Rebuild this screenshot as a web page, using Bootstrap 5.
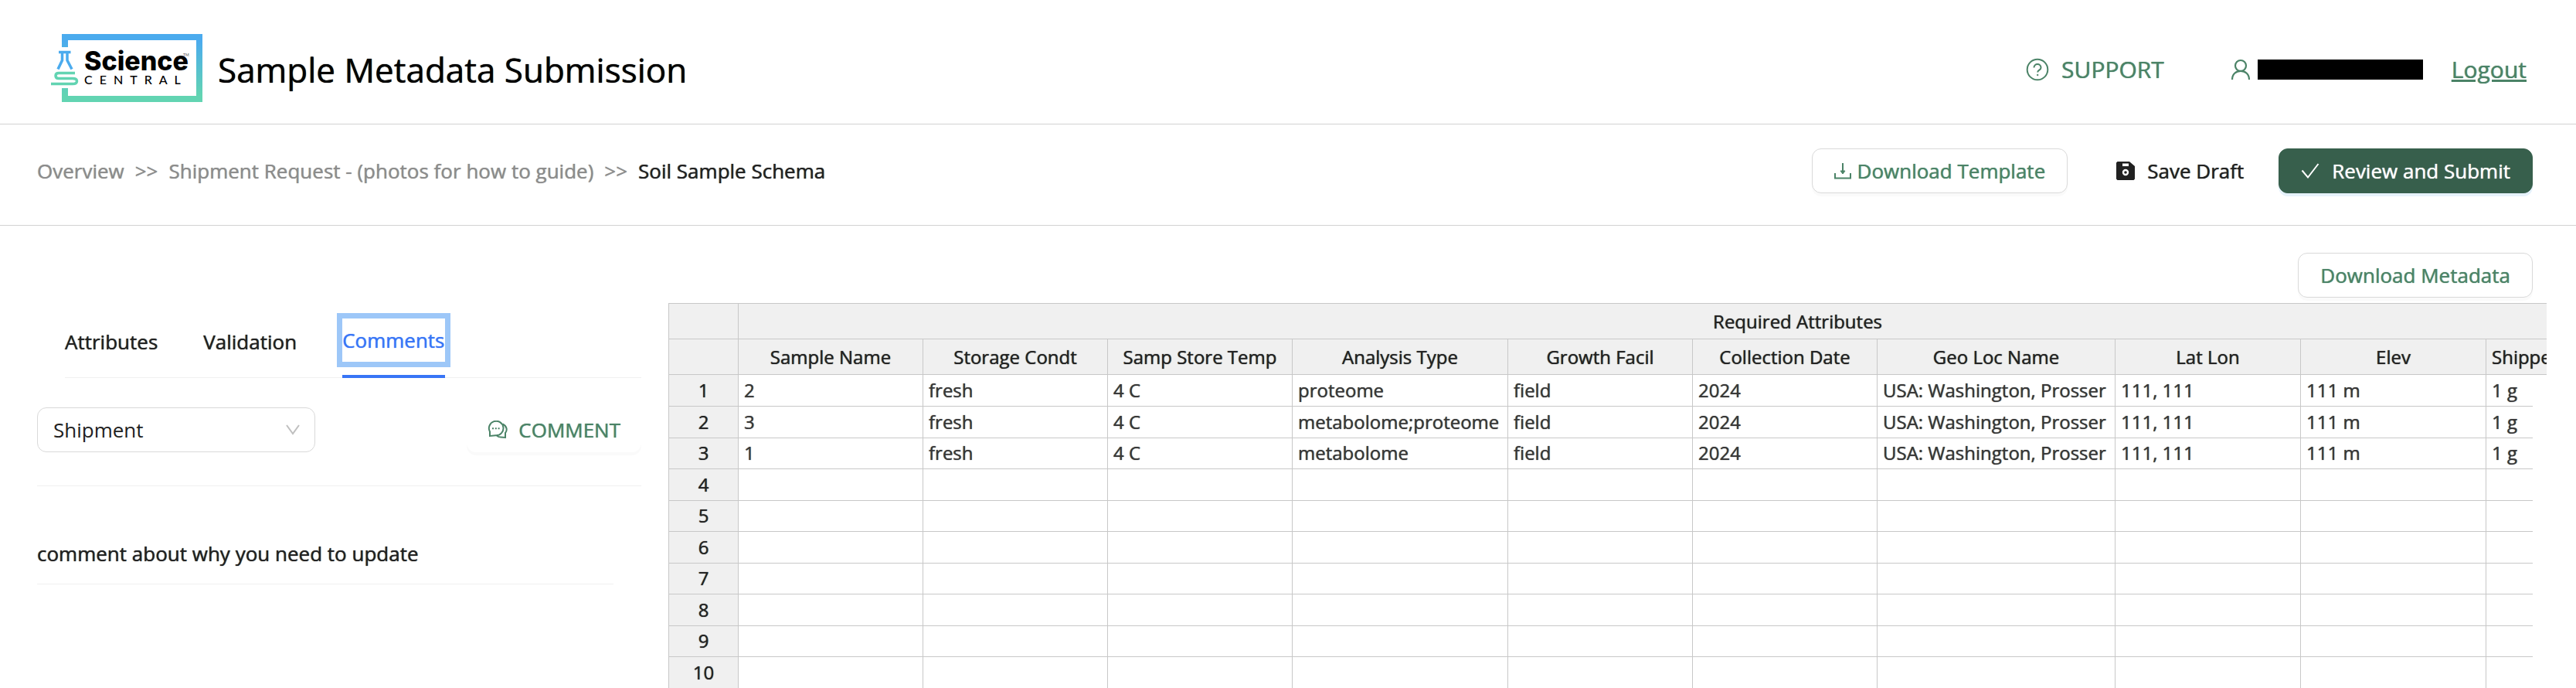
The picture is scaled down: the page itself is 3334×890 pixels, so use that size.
<!doctype html>
<html lang="en">
<head>
<meta charset="utf-8">
<meta name="viewport" content="width=device-width, initial-scale=1">
<title>Sample Metadata Submission</title>
<link href="https://cdn.jsdelivr.net/npm/bootstrap@5.3.0/dist/css/bootstrap.min.css" rel="stylesheet">
<script src="https://cdn.jsdelivr.net/npm/bootstrap@5.3.0/dist/js/bootstrap.bundle.min.js"></script>
<style>
body{font-family:"Open Sans","Noto Sans",sans-serif;font-size:26px;font-weight:500;color:#212121;line-height:40px;overflow-x:hidden;text-shadow:0 0 1px currentColor}
button{text-shadow:inherit}
.topbar{padding:36px 64px 24px;border-bottom:1px solid #d2d2d2}
.brand-logo{width:204px;height:100px;display:block;text-shadow:none}
.page-title{font-size:44px;font-weight:500;line-height:60px;color:#000;margin-left:14px}
.top-link,.top-link:hover{font-size:30px;color:#4b8367}
.user-mark{color:#4b8367;margin-left:86px}
.redacted{width:214px;height:26px;background:#000;margin:0 37px 0 9px}
.crumbbar{padding:31px 56px 41px 48px;border-bottom:1px solid #d2d2d2}
.crumbs{gap:14px}
.crumbs a,.crumbs .sep{color:#8c8c8c;text-decoration:none}
.act-row{gap:34px}
.act{font-size:26px;font-weight:500;line-height:40px;padding:8px 28px;border-radius:12px;border:1px solid #d9d9d9;color:#4b8367;background:#fff;box-shadow:0 4px 0 rgba(0,0,0,.02);display:flex;align-items:center;gap:16px}
.act-tight{gap:8px}
.act-plain{border-color:transparent;color:#212121;box-shadow:none;background:none;padding-right:10px}
.act-solid{background:#375f4c;border-color:#375f4c;color:#fff;box-shadow:0 4px 0 #e6f2fb}
.act-quiet{border-color:transparent;padding:8px 26px;gap:14px}
.main-area{padding-left:48px;gap:35px}
.side{width:782px;padding-top:120px}
.tab-row{margin-left:36px;gap:59px;border-bottom:1px solid #f0f0f0}
.tab-btn{background:none;border:0;padding:0 0 17px;color:#212121;font-weight:500}
.tab-btn span{display:block;padding:8px 0}
.tab-btn.current{color:#3875f6;border-bottom:4px solid #3875f6;margin-bottom:-1px}
.tab-btn.current span{outline:7px solid #9dc7f8}
.pick-row{padding:38px 0 43px;border-bottom:1px solid #f0f0f0}
.pick{width:360px;height:58px;padding:0 20px;border:1px solid #d9d9d9;border-radius:12px;font-size:26px;font-weight:400;line-height:40px;color:#212121;background:none;appearance:none}
.pick-wrap{display:grid;align-items:center}
.pick-wrap>*{grid-area:1/1}
.pick-wrap svg{justify-self:end;margin-right:20px}
.note{margin:67px 36px 0 0;padding-bottom:19px;border-bottom:1px solid #f0f0f0}
.data-side{padding-top:35px;min-width:0}
.data-tools{padding:0 56px 7px 0}
.head-clip{overflow:hidden;margin-right:38px}
.body-clip{overflow:hidden;margin-right:56px}
.sheet{table-layout:fixed;border-collapse:collapse;width:2832px;font-size:24px;line-height:32px}
.sheet th,.sheet td{border:1px solid #c8c8c8;padding:0 7px;height:41px;white-space:nowrap}
.sheet td{color:#373737}
.sheet th{background:#f0f0f0;text-align:center;font-weight:500;color:#222;padding:0}
.sheet thead th{height:46px}
.sheet thead th.cut{text-align:left;padding-left:7px}
.body-clip tr:nth-child(odd)>*{height:40px}
.body-clip tr:first-child>*{border-top:0}
.c-num{width:90px}.c-std{width:239px}.c-type{width:279px}.c-geo{width:308px}.c-wide{width:240px}
</style>
</head>
<body>
<header class="topbar d-flex align-items-center">
  <svg class="brand-logo" viewBox="64 36 204 100" role="img" aria-label="Science Central">
    <defs><linearGradient id="frame" gradientUnits="userSpaceOnUse" x1="0" y1="44" x2="0" y2="132"><stop offset=".1" stop-color="#4babee"/><stop offset=".9" stop-color="#62d4b2"/></linearGradient></defs>
    <path d="M80 61V44H262V132H80V114H88V124H254V52H88V61Z" fill="url(#frame)"/>
    <path d="M76 67.500H91.500M80.500 68V78L75 89.500M87 68V78L93 89.500" fill="none" stroke="#4babee" stroke-width="3.500"/>
    <path d="M97 94.500H76q-4 0-4 3.500t4 3.500H94q5.500 0 5.500 3.500t-5.500 3.500H66" fill="none" stroke="#62d4b2" stroke-width="3.500"/>
    <text x="109" y="91" font-family="Inter" font-weight="800" font-size="34" fill="#000">Science</text>
    <text x="109" y="109" font-family="Lato" font-weight="500" font-size="16" letter-spacing="9" fill="#000">CENTRAL</text>
    <text x="237" y="73" font-family="Lato" font-size="5" fill="#555">TM</text>
  </svg>
  <h1 class="page-title mb-0 pt-2">Sample Metadata Submission</h1>
  <nav class="d-flex align-items-center ms-auto pt-2">
    <a class="top-link text-decoration-none d-flex align-items-center" href="#">
      <svg class="me-3" width="30" height="30" viewBox="0 0 30 30" fill="none" stroke="currentColor" stroke-width="2"><circle cx="15" cy="15" r="13.300"/><path d="M10.500 12.500c0-6 9-6 9 0 0 3.500-4.300 2.800-4.300 6"/><circle cx="15.200" cy="22" r=".8" fill="currentColor" stroke-width="1"/></svg>SUPPORT</a>
    <svg class="user-mark" width="26" height="28" viewBox="0 0 26 28" fill="none" stroke="currentColor" stroke-width="2.200" aria-hidden="true"><circle cx="13" cy="9" r="7"/><path d="M2 27C2 20 7 15.800 13 15.800S24 20 24 27"/></svg>
    <span class="redacted"></span>
    <a class="top-link" href="#">Logout</a>
  </nav>
</header>
<section class="crumbbar d-flex align-items-center justify-content-between">
  <nav class="crumbs d-flex" aria-label="breadcrumb">
    <a href="#">Overview</a><span class="sep">&gt;&gt;</span><a href="#">Shipment Request - (photos for how to guide)</a><span class="sep">&gt;&gt;</span><span>Soil Sample Schema</span>
  </nav>
  <div class="act-row d-flex align-items-center">
    <button type="button" class="act act-tight"><svg width="22" height="22" viewBox="0 0 22 22" fill="none" stroke="currentColor" stroke-width="2"><path d="M1 14V20.500H21V14M11 1V12"/><path d="M8 11h6l-3 4Z" fill="currentColor" stroke-width="1"/></svg>Download Template</button>
    <button type="button" class="act act-plain"><svg width="24" height="24" viewBox="0 0 24 24"><path fill="currentColor" fill-rule="evenodd" d="M1.500 0H17L24 6V22.500L22.500 24H1.500L0 22.500V1.500ZM8 2.500V6H16V2.500ZM12 9.800a4.200 4.200 0 1 0 0 8.400a4.200 4.200 0 1 0 0-8.400ZM12 12.200a1.800 1.800 0 1 1 0 3.600a1.800 1.800 0 1 1 0-3.600Z"/></svg>Save Draft</button>
    <button type="button" class="act act-solid"><svg width="24" height="22" viewBox="0 0 24 22" fill="none" stroke="currentColor" stroke-width="2"><path d="M1.500 10.500L9 19.500L22.500 2"/></svg>Review and Submit</button>
  </div>
</section>
<main class="main-area d-flex">
  <aside class="side flex-shrink-0">
    <div class="tab-row d-flex" role="tablist">
      <button type="button" class="tab-btn" role="tab"><span>Attributes</span></button>
      <button type="button" class="tab-btn" role="tab"><span>Validation</span></button>
      <button type="button" class="tab-btn current" role="tab" aria-selected="true"><span>Comments</span></button>
    </div>
    <div class="pick-row d-flex align-items-center justify-content-between">
      <div class="pick-wrap">
        <select class="pick" aria-label="Comment scope"><option>Shipment</option></select>
        <svg width="18" height="14" viewBox="0 0 18 14" fill="none" stroke="#bfbfbf" stroke-width="2" aria-hidden="true"><path d="M1 1L9 12L17 1"/></svg>
      </div>
      <button type="button" class="act act-quiet"><svg width="26" height="24" viewBox="0 0 26 24" fill="none" stroke="currentColor" stroke-width="2"><path d="M3 20V14.500A9.300 9.300 0 1 1 10.500 19.300L3 20Z"/><path d="M19.500 4.500C25 7 26 12.500 23 16V22L17 21.500Q13.500 21.500 12 19.500"/><path d="M6 10.300h2M9.800 10.300h2M13.600 10.300h2"/></svg>COMMENT</button>
    </div>
    <p class="note">comment about why you need to update</p>
  </aside>
  <section class="data-side flex-grow-1">
    <div class="data-tools d-flex justify-content-end"><button type="button" class="act">Download Metadata</button></div>
    <div class="head-clip">
      <table class="sheet">
        <colgroup><col class="c-num"><col class="c-std"><col class="c-std"><col class="c-std"><col class="c-type"><col class="c-std"><col class="c-std"><col class="c-geo"><col class="c-wide"><col class="c-wide"><col class="c-wide"><col class="c-wide"></colgroup>
        <thead>
          <tr><th></th><th colspan="11">Required Attributes</th></tr>
          <tr><th></th><th>Sample Name</th><th>Storage Condt</th><th>Samp Store Temp</th><th>Analysis Type</th><th>Growth Facil</th><th>Collection Date</th><th>Geo Loc Name</th><th>Lat Lon</th><th>Elev</th><th class="cut">Shipped</th><th></th></tr>
        </thead>
      </table>
    </div>
    <div class="body-clip">
      <table class="sheet">
        <colgroup><col class="c-num"><col class="c-std"><col class="c-std"><col class="c-std"><col class="c-type"><col class="c-std"><col class="c-std"><col class="c-geo"><col class="c-wide"><col class="c-wide"><col class="c-wide"><col class="c-wide"></colgroup>
        <tbody id="rows"></tbody>
      </table>
    </div>
  </section>
</main>
<script>
const samples = [
  ['2','fresh','4 C','proteome','field','2024','USA: Washington, Prosser','111, 111','111 m','1 g'],
  ['3','fresh','4 C','metabolome;proteome','field','2024','USA: Washington, Prosser','111, 111','111 m','1 g'],
  ['1','fresh','4 C','metabolome','field','2024','USA: Washington, Prosser','111, 111','111 m','1 g']
];
const rows = document.getElementById('rows');
for (let r = 0; r < 10; r++) {
  const tr = rows.insertRow();
  const th = document.createElement('th');
  th.scope = 'row';
  th.textContent = r + 1;
  tr.append(th);
  for (let c = 0; c < 11; c++) tr.insertCell().textContent = (samples[r] || [])[c] || '';
}
</script>
</body>
</html>
